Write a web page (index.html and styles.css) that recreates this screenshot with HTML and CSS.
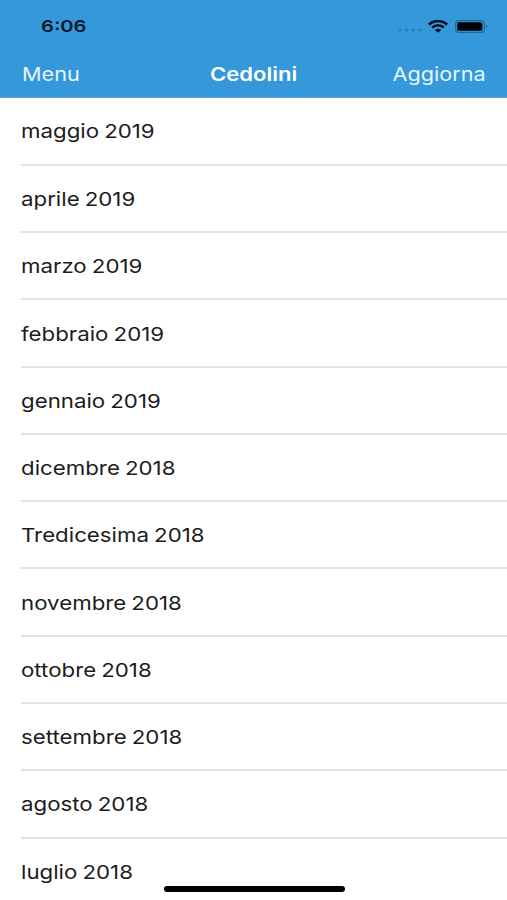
FILE: index.html
```html
<!DOCTYPE html>
<html lang="it">
<head>
<meta charset="utf-8">
<title>Cedolini</title>
<link rel="stylesheet" href="styles.css">
</head>
<body>
<div class="screen">
  <header class="header">
    <div class="status">
      <span class="time">6:06</span>
      <div class="indicators">
        <svg class="signal" viewBox="0 0 24 4"><circle cx="2" cy="2" r="1.5"/><circle cx="8.7" cy="2" r="1.5"/><circle cx="15.3" cy="2" r="1.5"/><circle cx="22" cy="2" r="1.5"/></svg>
        <svg class="wifi" viewBox="0 0 20 13" preserveAspectRatio="none"><path d="M.8 4.4Q10-2.6 19.2 4.4M4.1 7.6Q10 3 15.9 7.6"/><path class="dot" d="M6.8 9.9Q10 7.5 13.2 9.9L10 12.8Z"/></svg>
        <svg class="battery" viewBox="0 0 33 13"><rect class="shell" x=".6" y=".6" width="28.8" height="11.8" rx="3.4"/><rect x="2.2" y="2.2" width="25.2" height="8.6" rx="1.8"/><path class="tip" d="M31 4.3Q34 6.5 31 8.7Z"/></svg>
      </div>
    </div>
    <nav class="navbar">
      <span class="action">Menu</span>
      <h1 class="title">Cedolini</h1>
      <span class="action end">Aggiorna</span>
    </nav>
  </header>
  <ul class="list">
    <li><span>maggio 2019</span></li>
    <li><span>aprile 2019</span></li>
    <li><span>marzo 2019</span></li>
    <li><span>febbraio 2019</span></li>
    <li><span>gennaio 2019</span></li>
    <li><span>dicembre 2018</span></li>
    <li><span>Tredicesima 2018</span></li>
    <li><span>novembre 2018</span></li>
    <li><span>ottobre 2018</span></li>
    <li><span>settembre 2018</span></li>
    <li><span>agosto 2018</span></li>
    <li><span>luglio 2018</span></li>
  </ul>
  <div class="home-indicator"></div>
</div>
</body>
</html>
```
FILE: styles.css
```css
* { box-sizing: border-box; }
body { margin: 0; background: #fff; font-family: Inter, "Liberation Sans", sans-serif; }
.screen { position: relative; width: 507px; height: 900px; overflow: hidden; }
.header { height: 98px; background: #3498db; border-bottom: 1px solid #5ba9de; }
.status { height: 51px; padding: 1px 19px 0 41px; display: flex; align-items: center; justify-content: space-between; }
.time { font-size: 16.5px; font-weight: 600; color: #05182d; transform: scaleX(1.22); transform-origin: left; }
.indicators { display: flex; align-items: center; }
.signal { width: 24px; height: 4px; margin: 8px 6px 0 0; fill: #2a7cb5; }
.wifi { width: 20px; height: 13px; margin-right: 7px; fill: none; stroke: #04101e; stroke-width: 2.5; }
.wifi .dot { fill: #04101e; stroke: none; }
.battery { width: 33px; height: 13px; fill: #000409; }
.battery .shell { fill: none; stroke: #216794; stroke-width: 1.2; }
.battery .tip { fill: #216794; }
.navbar { height: 46px; padding: 0 21px 0 22px; display: grid; grid-template-columns: 1fr auto 1fr; align-items: center; color: #fff; }
.action, .title { margin: 0; font-size: 18.5px; font-weight: 400; line-height: 24px; }
.action { justify-self: start; transform: scaleX(1.17); transform-origin: left; color: #e6f7ff; }
.end { justify-self: end; transform-origin: right; }
.title { font-weight: 600; transform: scaleX(1.19); }
.list { list-style: none; margin: 0; padding: 0 0 0 21px; }
.list li { height: 67.27px; padding-top: 3px; display: flex; align-items: center; border-bottom: 2px solid #e2e2e4; }
.list li:first-child { height: 67.9px; }
.list span { font-size: 19px; line-height: 24px; color: #1c1c1c; white-space: nowrap; word-spacing: -1px; transform: scaleX(1.172); transform-origin: left; }
.home-indicator { position: absolute; left: 164px; top: 885.5px; width: 181px; height: 6px; border-radius: 3px; background: #000; }
```
